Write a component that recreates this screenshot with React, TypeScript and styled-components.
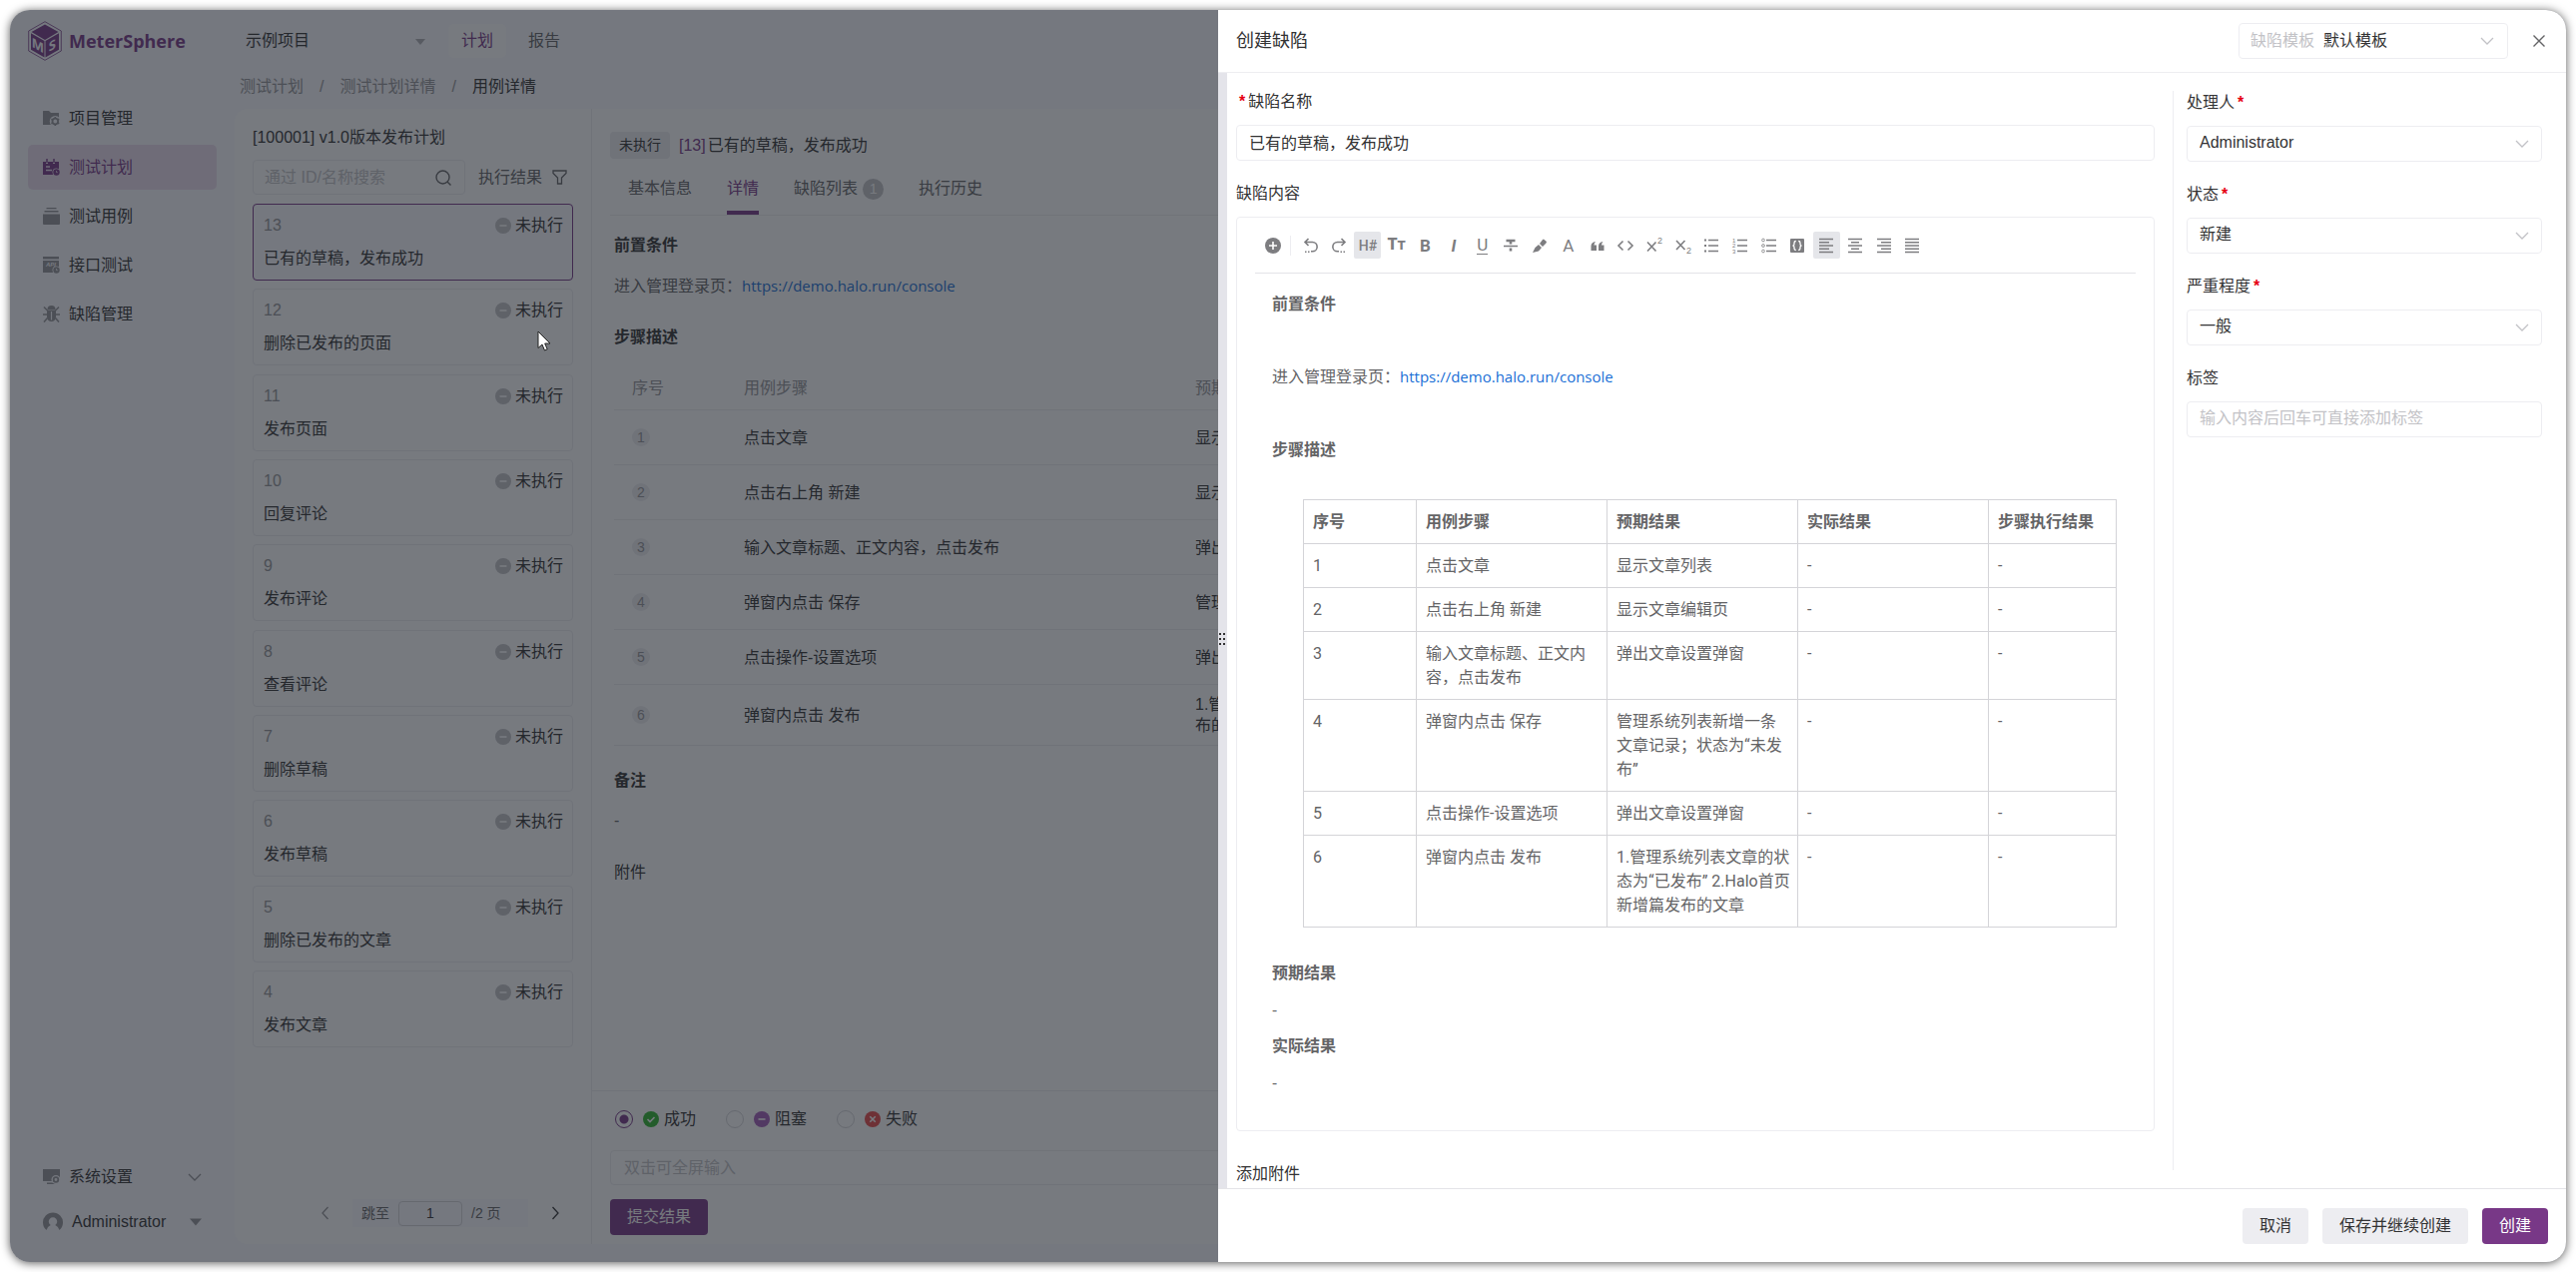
import React from "react";
import styled, { createGlobalStyle, css } from "styled-components";

const purple = "#783887";
const text1 = "#323233";
const text2 = "#646466";
const text3 = "#959598";
const text4 = "#c2c2c6";
const line = "#ededf1";
const shell = "#f9f9fe";
const ui = `"Liberation Sans", "Noto Sans CJK SC", sans-serif`;
const prose = `"Open Sans", "Noto Sans CJK SC", sans-serif`;
const compact = `Roboto, "Noto Sans CJK SC", sans-serif`;

const GlobalStyle = createGlobalStyle`
  *, *::before, *::after { box-sizing: border-box; }
  body { margin: 0; background: #fff; }
  body, button, input, select { font-family: ${ui}; font-size: 16px; line-height: 24px; color: ${text1}; }
  button { border: 0; padding: 0; background: none; cursor: pointer; }
  h1, h2, h3, p, ul, ol { margin: 0; padding: 0; font-size: 16px; font-weight: 400; }
  li { list-style: none; }
  a { text-decoration: none; }
  svg { display: block; flex: none; }
`;

const Window = styled.div`
  position: relative;
  display: flex;
  height: calc(100vh - 20px);
  min-height: 1200px;
  margin: 10px;
  border-radius: 20px;
  overflow: hidden;
  background: ${shell};
`;
const Frame = styled.div`
  display: flow-root;
  & > div { box-shadow: 0 1px 10px rgba(0, 0, 0, 0.65); }
`;

/* ---------- sidebar ---------- */
const Sidebar = styled.aside`
  display: flex;
  flex-direction: column;
  flex: none;
  width: 225px;
  padding: 0 18px 18px;
`;
const Brand = styled.div`
  display: flex;
  align-items: center;
  gap: 7px;
  height: 62px;
  margin-bottom: 24px;
  color: ${purple};
  font-family: "Open Sans", sans-serif;
  font-size: 18px;
  font-weight: 700;
`;
const Nav = styled.nav`
  display: flex;
  flex-direction: column;
  gap: 4px;
  flex: 1;
`;
const NavItem = styled.button<{ $active?: boolean }>`
  display: flex;
  align-items: center;
  gap: 9px;
  width: 100%;
  height: 45px;
  padding: 0 15px;
  border-radius: 5px;
  text-align: left;
  color: ${(p) => (p.$active ? purple : text1)};
  background: ${(p) => (p.$active ? "#ebddee" : "transparent")};
  svg { color: ${(p) => (p.$active ? purple : text3)}; }
  span { flex: 1; }
`;

/* ---------- main ---------- */
const Main = styled.div`
  display: flex;
  flex-direction: column;
  flex: 1;
  min-width: 0;
  padding-bottom: 18px;
`;
const TopBar = styled.header`
  display: flex;
  align-items: center;
  height: 62px;
  padding-left: 11px;
`;
const ProjectPicker = styled.div`
  position: relative;
  width: 185px;
  margin-right: 18px;
  select {
    width: 100%;
    appearance: none;
    border: 0;
    padding: 0;
    background: none;
  }
  svg { position: absolute; right: 5px; top: 9px; color: #b0b0b5; pointer-events: none; }
`;
const TopTab = styled.button<{ $active?: boolean }>`
  height: 34px;
  padding: 0 13px;
  margin-right: 9px;
  border-radius: 5px;
  color: ${(p) => (p.$active ? purple : text2)};
  background: ${(p) => (p.$active ? "#fff" : "none")};
`;
const Crumbs = styled.nav`
  display: flex;
  gap: 16px;
  height: 37px;
  padding: 3px 0 0 5px;
  color: ${text3};
  a { color: ${text3}; }
  strong { font-weight: 400; color: ${text1}; }
`;
const Content = styled.div`
  display: flex;
  flex: 1;
  min-height: 0;
  margin-right: 18px;
  border-radius: 13px;
  background: #fff;
`;

/* ---------- plan list ---------- */
const PlanPanel = styled.section`
  display: flex;
  flex-direction: column;
  flex: none;
  width: 358px;
  padding: 17px 18px;
  border-right: 1px solid ${line};
`;
const SearchRow = styled.div`
  display: flex;
  align-items: center;
  gap: 13px;
  margin: 10px 0 9px;
  color: ${text2};
`;
const SearchBox = styled.label`
  display: flex;
  align-items: center;
  width: 213px;
  height: 35px;
  padding: 0 13px 0 11px;
  border: 1px solid ${line};
  border-radius: 4px;
  input {
    flex: 1;
    min-width: 0;
    border: 0;
    padding: 0;
    background: none;
    outline: none;
  }
  input::placeholder { color: ${text4}; opacity: 1; }
`;
const FilterButton = styled.button`
  display: flex;
  align-items: center;
  gap: 10px;
  color: ${text2};
`;
const CaseList = styled.ul`
  display: flex;
  flex-direction: column;
  justify-content: space-between;
  height: 845px;
`;
const CaseCard = styled.li<{ $active?: boolean }>`
  display: flex;
  flex-direction: column;
  gap: 9px;
  height: 77px;
  padding: 9px 9px 9px 10px;
  border: 1px solid ${(p) => (p.$active ? purple : line)};
  border-radius: 4px;
  background: ${(p) => (p.$active ? shell : "#fff")};
`;
const CaseTop = styled.div`
  display: flex;
  justify-content: space-between;
  color: ${text3};
`;
const Status = styled.span`
  display: flex;
  align-items: center;
  gap: 4px;
  color: ${text1};
`;
const Pager = styled.div`
  display: flex;
  align-items: center;
  justify-content: flex-end;
  gap: 9px;
  margin-top: auto;
`;
const PagerArrow = styled.button<{ $muted?: boolean }>`
  display: flex;
  align-items: center;
  justify-content: center;
  width: 36px;
  height: 28px;
  color: ${(p) => (p.$muted ? text3 : text1)};
`;
const PagerJump = styled.label`
  display: flex;
  align-items: center;
  gap: 9px;
  width: 176px;
  height: 28px;
  padding-left: 9px;
  font-size: 14px;
  color: ${text2};
  background: ${shell};
  input {
    width: 64px;
    height: 25px;
    border: 1px solid #d4d4d8;
    border-radius: 4px;
    text-align: center;
    font-size: 14px;
    background: none;
  }
`;

/* ---------- case detail ---------- */
const Detail = styled.section`
  display: flex;
  flex-direction: column;
  flex: 1;
  min-width: 0;
`;
const DetailScroll = styled.div`
  flex: 1;
  min-height: 0;
  padding: 23px 18px 0;
  overflow: hidden;
`;
const DetailTitle = styled.div`
  display: flex;
  align-items: center;
  gap: 9px;
  height: 27px;
  em { font-style: normal; color: ${purple}; margin-right: 2px; }
`;
const Badge = styled.span`
  padding: 0 9px;
  border-radius: 4px;
  font-size: 14px;
  line-height: 27px;
  background: #ededf1;
`;
const Tabs = styled.div`
  display: flex;
  gap: 35px;
  height: 57px;
  padding-left: 18px;
  border-bottom: 1px solid ${line};
`;
const Tab = styled.button<{ $active?: boolean }>`
  display: flex;
  align-items: center;
  gap: 5px;
  padding-top: 4px;
  color: ${(p) => (p.$active ? purple : text2)};
  ${(p) => p.$active && css`box-shadow: inset 0 -4px 0 ${purple};`}
`;
const Count = styled.span`
  width: 21px;
  height: 21px;
  border-radius: 50%;
  font-size: 14px;
  line-height: 21px;
  text-align: center;
  color: #fff;
  background: ${text4};
`;
const DetailBody = styled.div`
  padding: 18px 0 0 4px;
`;
const Heading = styled.h3<{ $plain?: boolean }>`
  font-weight: ${(p) => (p.$plain ? 400 : 700)};
`;
const Line = styled.p<{ $bottom: number }>`
  margin: 16px 0 ${(p) => p.$bottom}px;
  color: ${text2};
  a { font-family: ${prose}; font-size: 15px; color: #1a6fd6; }
`;
const StepTable = styled.table`
  width: 1016px;
  margin: 17px 0 23px;
  border-collapse: separate;
  border-spacing: 0;
  table-layout: fixed;
  th, td { padding: 0 18px; border-bottom: 1px solid ${line}; text-align: left; line-height: 21px; }
  th { height: 44px; font-weight: 400; color: ${text3}; }
  td { height: 55px; }
  tr:last-child td { height: 61px; }
`;
const StepNo = styled.span`
  display: block;
  width: 18px;
  height: 18px;
  border-radius: 50%;
  font-size: 14px;
  line-height: 18px;
  text-align: center;
  color: ${text3};
  background: #ededf1;
`;
const ResultBar = styled.form`
  display: flex;
  flex-direction: column;
  align-items: flex-start;
  padding: 16px 18px 9px;
  border-top: 1px solid ${line};
`;
const Radios = styled.div`
  display: flex;
  gap: 30px;
  margin: 0 5px 19px;
`;
const RadioLabel = styled.label`
  display: flex;
  align-items: center;
  gap: 5px;
  input {
    appearance: none;
    width: 18px;
    height: 18px;
    margin: 0 5px 0 0;
    border: 1px solid #d4d4d8;
    border-radius: 50%;
  }
  input:checked {
    border-color: ${purple};
    background: radial-gradient(circle, ${purple} 4px, transparent 5px);
  }
`;
const CommentInput = styled.input`
  width: 100%;
  height: 35px;
  padding: 0 13px;
  margin-bottom: 14px;
  border: 1px solid ${line};
  border-radius: 4px;
  background: none;
  &::placeholder { color: ${text4}; opacity: 1; }
`;

const Button = styled.button<{ $primary?: boolean }>`
  height: 36px;
  padding: 0 17px;
  border-radius: 4px;
  color: ${(p) => (p.$primary ? "#fff" : text1)};
  background: ${(p) => (p.$primary ? purple : "#ededf1")};
`;

/* ---------- drawer ---------- */
const Mask = styled.div`
  position: absolute;
  inset: 0;
  background: rgba(29, 33, 41, 0.6);
`;
const Pointer = styled.svg`
  position: absolute;
  left: 528px;
  top: 321px;
`;
const Drawer = styled.section`
  position: absolute;
  top: 0;
  right: 0;
  bottom: 0;
  display: flex;
  flex-direction: column;
  width: 1350px;
  max-width: 100%;
  background: #fff;
`;
const DrawerHead = styled.header`
  display: flex;
  align-items: center;
  height: 63px;
  padding: 0 18px;
  border-bottom: 1px solid ${line};
  h2 { flex: 1; font-size: 18px; }
`;
const TemplatePicker = styled.label`
  position: relative;
  display: flex;
  align-items: center;
  gap: 9px;
  width: 270px;
  height: 36px;
  padding-left: 11px;
  border: 1px solid ${line};
  border-radius: 4px;
  color: ${text4};
  select {
    flex: 1;
    appearance: none;
    border: 0;
    padding: 0;
    background: none;
  }
  svg { position: absolute; right: 13px; top: 10px; pointer-events: none; }
`;
const CloseButton = styled.button`
  display: flex;
  justify-content: center;
  width: 18px;
  margin-left: 22px;
  color: ${text2};
`;
const DrawerBody = styled.div`
  display: flex;
  flex: 1;
  min-height: 0;
  overflow: hidden;
`;
const Handle = styled.div`
  display: flex;
  align-items: center;
  justify-content: center;
  width: 9px;
  padding-top: 16px;
  background: #e4e4ea;
`;
const FormMain = styled.div`
  flex: 1;
  min-width: 0;
  padding: 17px 18px 0 9px;
`;
const FormSide = styled.div`
  width: 370px;
  margin: 18px 24px 18px 0;
  padding-left: 13px;
  border-left: 1px solid ${line};
`;
const Field = styled.div`
  display: flex;
  flex-direction: column;
  gap: 11px;
  margin-bottom: 21px;
`;
const FieldLabel = styled.label`
  i {
    margin: 0 3px;
    font-style: normal;
    font-weight: 700;
    color: #e60012;
  }
`;
const TextInput = styled.input`
  width: 100%;
  height: 36px;
  padding: 0 12px 2px;
  border: 1px solid ${line};
  border-radius: 4px;
  outline: none;
  &::placeholder { color: ${text4}; opacity: 1; }
`;
const SelectBox = styled.div`
  position: relative;
  select {
    width: 100%;
    height: 36px;
    padding: 0 12px 2px;
    appearance: none;
    border: 1px solid ${line};
    border-radius: 4px;
    background: #fff;
  }
  svg { position: absolute; right: 13px; top: 11px; color: ${text4}; pointer-events: none; }
`;
const Editor = styled.div`
  margin-bottom: 10px;
  border: 1px solid ${line};
  border-radius: 4px;
  font-family: ${prose};
  color: ${text2};
`;
const Toolbar = styled.div`
  display: flex;
  align-items: center;
  height: 56px;
  margin: 0 18px;
  padding-left: 4px;
  border-bottom: 1px solid #e4e4e8;
`;
const Divider = styled.span`
  width: 1px;
  height: 20px;
  margin: 0 6px 0 4px;
  background: ${line};
`;
const Tools = styled.div`
  display: flex;
  justify-content: space-between;
  width: 630px;
`;
const Tool = styled.button<{ $on?: boolean }>`
  display: flex;
  align-items: center;
  justify-content: center;
  width: 27px;
  height: 27px;
  border-radius: 2px;
  color: #7d7d80;
  background: ${(p) => (p.$on ? "#e5e6ea" : "none")};
`;
const Glyph = styled.span<{ $weight?: number; $size?: number; $italic?: boolean; $underline?: boolean }>`
  font-family: Roboto, sans-serif;
  font-size: ${(p) => p.$size ?? 17}px;
  line-height: 18px;
  font-weight: ${(p) => p.$weight ?? 400};
  font-style: ${(p) => (p.$italic ? "italic" : "normal")};
  color: #7d7d80;
  border-bottom: ${(p) => (p.$underline ? "1px solid currentColor" : "0")};
  small { font-size: 13px; }
`;
const Doc = styled.div`
  padding: 18px 35px 36px;
  a { font-size: 15px; color: #1a6fd6; }
`;
const DocHead = styled.h3<{ $gap?: number }>`
  margin-bottom: ${(p) => p.$gap ?? 13}px;
  font-weight: 700;
`;
const DocLine = styled.p<{ $gap?: number }>`
  margin-bottom: ${(p) => p.$gap ?? 12}px;
`;
const DocTable = styled.table`
  width: calc(100% - 33px);
  margin: 0 0 33px 31px;
  border-collapse: collapse;
  table-layout: fixed;
  font-family: ${compact};
  th, td {
    padding: 10px 6px 9px 9px;
    border: 1px solid #d4d4d8;
    text-align: left;
    vertical-align: top;
  }
`;
const DrawerFoot = styled.footer`
  display: flex;
  align-items: center;
  justify-content: flex-end;
  gap: 14px;
  height: 74px;
  padding-right: 18px;
  border-top: 1px solid #e4e4e8;
`;

/* ---------- icons ---------- */
const Chevron = ({ size = 14, d = "M1 4l6 6 6-6" }: { size?: number; d?: string }) => (
  <svg width={size} height={size} viewBox="0 0 14 14" fill="none" stroke="currentColor" strokeWidth="1.3">
    <path d={d} />
  </svg>
);
const Caret = ({ width = 12 }: { width?: number }) => (
  <svg width={width} height="8" viewBox="0 0 12 8" fill="currentColor"><path d="M0 .5h12L6 7.5z" /></svg>
);
const Dot = ({ color, children }: { color: string; children: React.ReactNode }) => (
  <svg width="16" height="16" viewBox="0 0 16 16" fill="none" stroke="#fff" strokeWidth="1.6">
    <circle cx="8" cy="8" r="8" fill={color} stroke="none" />
    {children}
  </svg>
);
const Logo = () => (
  <svg width="34" height="40" viewBox="0 0 34 40">
    <path d="M17 .7L33.3 10v20L17 39.3.7 30V10z" fill="none" stroke={purple} strokeWidth=".8" />
    <path d="M17 3.5L30.5 11 17 19 3.5 11z" fill={purple} />
    <path d="M3 12.2l13.5 7.9V36.5L3 28.8z" fill={purple} />
    <path d="M31 12.2l-13.5 7.9V36.5L31 28.8z" fill={purple} />
    <g fill={shell} fontFamily="Open Sans" fontWeight="700" fontSize="13" textAnchor="middle">
      <text transform="translate(9.8 29) skewY(30)">M</text>
      <text transform="translate(24.3 29) skewY(-30)">S</text>
    </g>
  </svg>
);
const nav17 = { width: 17, height: 17, viewBox: "0 0 17 17" };
const FolderIcon = () => (
  <svg {...nav17} fill="currentColor">
    <path d="M0 1.5Q0 1 .5 1H6l2 2h7.5q.5 0 .5.5V15H.5q-.5 0-.5-.5z" />
    <circle cx="12.3" cy="11.5" r="5.5" fill={shell} />
    <circle cx="12.3" cy="11.5" r="2.8" fill="none" stroke="currentColor" strokeWidth="1.8" />
    <path d="M12.3 7v1.500M12.3 14.500V16M8.400 9.200l1.300.8M14.900 13l1.300.8M16.200 9.200l-1.300.8M9.700 13l-1.300.8" stroke="currentColor" strokeWidth="1.600" />
  </svg>
);
const PlanIcon = () => (
  <svg {...nav17}>
    <path d="M0 3h3v2h2V3h5v2h2V3h4v13H0z" fill="currentColor" />
    <path d="M4 0v4M11 0v4" stroke="currentColor" strokeWidth="1.400" />
    <path d="M3 8h4M3 11.500h6" stroke="#ebddee" strokeWidth="1.500" />
    <circle cx="13.500" cy="13.500" r="4" fill="#ebddee" />
    <circle cx="13.500" cy="13.500" r="3.200" fill="currentColor" />
    <path d="M13.500 12v1.700h1.300" stroke="#ebddee" fill="none" strokeWidth=".8" />
  </svg>
);
const StackIcon = () => (
  <svg {...nav17} fill="currentColor">
    <path d="M3.500 0h10v1.200h-10zM1.500 3h14v1.500h-14zM0 6.500h17V16q0 1-1 1H1q-1 0-1-1z" />
  </svg>
);
const ApiIcon = () => (
  <svg {...nav17}>
    <path d="M0 0h16v2.500H0zM0 4h16v12H0z" fill="currentColor" />
    <circle cx="13.500" cy="13.500" r="4" fill={shell} />
    <circle cx="13.500" cy="13.500" r="3.200" fill="currentColor" />
    <path d="M13.500 12v1.700h1.300" stroke={shell} fill="none" strokeWidth=".8" />
    <text x="8" y="10" fontSize="6" fontWeight="700" fontStyle="italic" textAnchor="middle" fill={shell}>API</text>
  </svg>
);
const BugIcon = () => (
  <svg {...nav17} fill="currentColor">
    <path d="M4.500 4a4 4 0 0 1 8 0z" />
    <path d="M4 4.500h9v7a4.500 4.500 0 0 1-9 0z" />
    <path d="M1 1.500L4.500 5M16 1.500L12.500 5M0 9h4M13 9h4M4.500 12.500L1 16.500M12.500 12.500l3.500 4" stroke="currentColor" strokeWidth="1.500" />
    <path d="M8.500 6v8.500" stroke={shell} strokeWidth="1.200" />
  </svg>
);
const ScreenIcon = () => (
  <svg {...nav17} fill="currentColor">
    <path d="M0 1h17v12H0zM4 14.500h8V16H4z" />
    <circle cx="13" cy="11.500" r="4.500" fill={shell} />
    <circle cx="13" cy="11.500" r="2.300" fill="none" stroke="currentColor" strokeWidth="1.800" />
  </svg>
);
const UserIcon = () => (
  <svg width="20" height="20" viewBox="0 0 20 20" fill="currentColor">
    <path fillRule="evenodd" d="M3.500 18A10 10 0 1 1 16.500 18Q15.500 14.500 12.300 13A4.200 4.200 0 1 0 7.700 13Q4.500 14.500 3.500 18z" />
  </svg>
);
const CircleX = <path d="M5.300 5.300l5.400 5.400M10.700 5.300l-5.400 5.400" />;
const Minus = <path d="M4.500 8h7" />;
const Check = <path d="M4.500 8l2.500 2.500 4.500-4.500" />;

const I = ({ children, w = 1.6 }: { children: React.ReactNode; w?: number }) => (
  <svg width="18" height="18" viewBox="0 0 18 18" fill="none" stroke="currentColor" strokeWidth={w}>{children}</svg>
);
const bars = (xs: [number, number][]) => (
  <I w={1.3}><path d={xs.map(([a, b], i) => `M${a} ${2.5 + i * 3.25}H${b}`).join("")} /></I>
);
const rows3 = <path d="M6 3.500h10M6 9h10M6 14.500h10" />;

const tools: { name: string; on?: boolean; icon: React.ReactNode }[] = [
  { name: "撤销", icon: <I><path d="M6.500 2L3 5.500 6.500 9M3 5.500h7.500a4.600 4.600 0 0 1 0 9.300h-1.500" /><path d="M3 15.200h1.500M6 15.200h1.500" /></I> },
  { name: "重做", icon: <I><path d="M11.500 2L15 5.500 11.500 9M15 5.500H7.500a4.600 4.600 0 0 0 0 9.300h1.500" /><path d="M10.500 15.200H12M13.500 15.200H15" /></I> },
  { name: "标题", on: true, icon: <Glyph $weight={500} $size={14}>H#</Glyph> },
  { name: "字号", icon: <Glyph $weight={900} $size={16}>T<small>T</small></Glyph> },
  { name: "加粗", icon: <Glyph $weight={700}>B</Glyph> },
  { name: "斜体", icon: <Glyph $weight={700} $italic>I</Glyph> },
  { name: "下划线", icon: <Glyph $underline>U</Glyph> },
  { name: "删除线", icon: <I><path d="M2 9.500h14" /><path d="M4.500 4h9M9 4v3.500M9 11.500v3" strokeWidth="2.600" /></I> },
  { name: "高亮", icon: <I><path d="M2 16l2.500-5 3.500-3 3 3-3 3.500zM9 7l3-4 1-.5L16 5l-.5 1.500-3.500 3.500z" fill="currentColor" stroke="none" /></I> },
  { name: "颜色", icon: <Glyph>A</Glyph> },
  { name: "引用", icon: <I><path d="M2.500 14V9.500Q2.500 5.500 7 5q-1.500 1.500-1.500 3.500H8V14zM10 14V9.500Q10 5.500 14.500 5q-1.500 1.500-1.500 3.500h2.500V14z" fill="currentColor" stroke="none" /></I> },
  { name: "代码", icon: <I><path d="M6.500 4.500L2 9l4.500 4.500M11.500 4.500L16 9l-4.500 4.500" /></I> },
  { name: "上标", icon: <I><path d="M2 5.500l8.500 9M10.500 5.500L2 14.500" /><text x="12" y="6.500" fontSize="9" fill="currentColor" stroke="none">2</text></I> },
  { name: "下标", icon: <I><path d="M2 4l8.500 9M10.500 4L2 13" /><text x="12" y="17" fontSize="9" fill="currentColor" stroke="none">2</text></I> },
  { name: "无序列表", icon: <I w={1.3}>{rows3}<path d="M2 3.500h2M2 9h2M2 14.500h2" strokeWidth="2" /></I> },
  { name: "有序列表", icon: <I w={1.3}>{rows3}<g fontSize="6" fill="currentColor" stroke="none"><text x="1" y="5.500">1</text><text x="1" y="11">2</text><text x="1" y="16.500">3</text></g></I> },
  { name: "任务列表", icon: <I w={1.3}>{rows3}<g strokeWidth=".8"><circle cx="3" cy="3.500" r="1.400" /><circle cx="3" cy="9" r="1.400" /><circle cx="3" cy="14.500" r="1.400" /></g></I> },
  { name: "代码块", icon: <I><rect x="2" y="2" width="14" height="14" rx="1" fill="currentColor" stroke="none" /><path d="M7.800 4.500q-1.800 0-1.800 1.700v1.300q0 1.500-1.500 1.500 1.500 0 1.500 1.500v1.300q0 1.700 1.800 1.700M10.200 4.500q1.800 0 1.800 1.700v1.300q0 1.500 1.500 1.500-1.500 0-1.500 1.500v1.300q0 1.700-1.800 1.700" stroke="#fff" strokeWidth="1.300" /></I> },
  { name: "左对齐", on: true, icon: bars([[2, 16], [2, 12], [2, 16], [2, 12], [2, 16]]) },
  { name: "居中", icon: bars([[2, 16], [5, 13], [2, 16], [5, 13], [2, 16]]) },
  { name: "右对齐", icon: bars([[2, 16], [6, 16], [2, 16], [6, 16], [2, 16]]) },
  { name: "两端对齐", icon: bars([[2, 16], [2, 16], [2, 16], [2, 16], [2, 16]]) },
];

/* ---------- data ---------- */
const cases: [number, string][] = [
  [13, "已有的草稿，发布成功"], [12, "删除已发布的页面"], [11, "发布页面"], [10, "回复评论"], [9, "发布评论"],
  [8, "查看评论"], [7, "删除草稿"], [6, "发布草稿"], [5, "删除已发布的文章"], [4, "发布文章"],
];
const steps: [string, string][] = [
  ["点击文章", "显示文章列表"],
  ["点击右上角 新建", "显示文章编辑页"],
  ["输入文章标题、正文内容，点击发布", "弹出文章设置弹窗"],
  ["弹窗内点击 保存", "管理系统列表新增一条文章记录；状态为“未发布”"],
  ["点击操作-设置选项", "弹出文章设置弹窗"],
  ["弹窗内点击 发布", "1.管理系统列表文章的状态为“已发布” 2.Halo首页新增篇发布的文章"],
];
const menu: [string, React.ReactNode][] = [
  ["项目管理", <FolderIcon />], ["测试计划", <PlanIcon />], ["测试用例", <StackIcon />],
  ["接口测试", <ApiIcon />], ["缺陷管理", <BugIcon />],
];
const url = "https://demo.halo.run/console";

function PlanSide() {
  return (
    <PlanPanel>
      <h1>[100001] v1.0版本发布计划</h1>
      <SearchRow>
        <SearchBox>
          <input type="text" placeholder="通过 ID/名称搜索" aria-label="通过 ID/名称搜索" />
          <svg width="16" height="16" viewBox="0 0 16 16" fill="none" stroke="currentColor" strokeWidth="1.400">
            <circle cx="7.500" cy="7.500" r="6.500" /><path d="M12 12l3.500 3.500" />
          </svg>
        </SearchBox>
        <FilterButton type="button">
          执行结果
          <svg width="15" height="15" viewBox="0 0 15 15" fill="none" stroke="currentColor" strokeWidth="1.300">
            <path d="M1 1h13v2.500L9.500 8v6h-4V8L1 3.500z" />
          </svg>
        </FilterButton>
      </SearchRow>
      <CaseList>
        {cases.map(([id, name], i) => (
          <CaseCard key={id} $active={i === 0}>
            <CaseTop>{id}<Status><Dot color={text4}>{Minus}</Dot>未执行</Status></CaseTop>
            <span>{name}</span>
          </CaseCard>
        ))}
      </CaseList>
      <Pager>
        <PagerArrow type="button" $muted aria-label="上一页"><Chevron d="M9.500 1l-5.500 6 5.500 6" /></PagerArrow>
        <PagerJump>跳至<input type="text" defaultValue="1" /> /2 页</PagerJump>
        <PagerArrow type="button" aria-label="下一页"><Chevron d="M4.500 1l5.500 6-5.500 6" /></PagerArrow>
      </Pager>
    </PlanPanel>
  );
}

function CaseDetail() {
  return (
    <Detail>
      <DetailScroll>
        <DetailTitle><Badge>未执行</Badge><span><em>[13]</em>已有的草稿，发布成功</span></DetailTitle>
        <Tabs>
          <Tab type="button">基本信息</Tab>
          <Tab type="button" $active>详情</Tab>
          <Tab type="button">缺陷列表<Count>1</Count></Tab>
          <Tab type="button">执行历史</Tab>
        </Tabs>
        <DetailBody>
          <Heading>前置条件</Heading>
          <Line $bottom={27}>进入管理登录页：<a href={url}>{url}</a></Line>
          <Heading>步骤描述</Heading>
          <StepTable>
            <colgroup><col width="112" /><col width="452" /><col width="452" /></colgroup>
            <thead><tr><th>序号</th><th>用例步骤</th><th>预期结果</th></tr></thead>
            <tbody>
              {steps.map(([step, expected], i) => (
                <tr key={i}><td><StepNo>{i + 1}</StepNo></td><td>{step}</td><td>{expected}</td></tr>
              ))}
            </tbody>
          </StepTable>
          <Heading>备注</Heading>
          <Line $bottom={28}>-</Line>
          <Heading $plain>附件</Heading>
        </DetailBody>
      </DetailScroll>
      <ResultBar>
        <Radios>
          <RadioLabel><input type="radio" name="result" defaultChecked /><Dot color="#2fb52f">{Check}</Dot>成功</RadioLabel>
          <RadioLabel><input type="radio" name="result" /><Dot color="#a45cb8">{Minus}</Dot>阻塞</RadioLabel>
          <RadioLabel><input type="radio" name="result" /><Dot color="#e84a4a">{CircleX}</Dot>失败</RadioLabel>
        </Radios>
        <CommentInput type="text" placeholder="双击可全屏输入" aria-label="双击可全屏输入" />
        <Button type="button" $primary>提交结果</Button>
      </ResultBar>
    </Detail>
  );
}

function SideSelect({ id, label, value }: { id: string; label: string; value: string }) {
  return (
    <Field>
      <FieldLabel htmlFor={id}>{label}<i>*</i></FieldLabel>
      <SelectBox>
        <select id={id}><option>{value}</option></select>
        <Chevron />
      </SelectBox>
    </Field>
  );
}

function DefectDrawer() {
  return (
    <Drawer role="dialog" aria-label="创建缺陷">
      <DrawerHead>
        <h2>创建缺陷</h2>
        <TemplatePicker>
          缺陷模板
          <select><option>默认模板</option></select>
          <Chevron />
        </TemplatePicker>
        <CloseButton type="button" aria-label="关闭">
          <svg width="12" height="12" viewBox="0 0 12 12" stroke="currentColor" strokeWidth="1.400"><path d="M.5.5l11 11M11.5.5l-11 11" /></svg>
        </CloseButton>
      </DrawerHead>
      <DrawerBody>
        <Handle>
          <svg width="7" height="12" viewBox="0 0 7 12" fill={text1}>
            <path d="M0 0h2v2H0zM4 0h2v2H4zM0 5h2v2H0zM4 5h2v2H4zM0 10h2v2H0zM4 10h2v2H4z" />
          </svg>
        </Handle>
        <FormMain>
          <Field>
            <FieldLabel htmlFor="defect-name"><i>*</i>缺陷名称</FieldLabel>
            <TextInput id="defect-name" defaultValue="已有的草稿，发布成功" />
          </Field>
          <Field>
            <span id="defect-body">缺陷内容</span>
            <Editor aria-labelledby="defect-body">
              <Toolbar>
                <Tool type="button" aria-label="插入">
                  <svg width="16" height="16" viewBox="0 0 16 16"><circle cx="8" cy="8" r="8" fill="currentColor" /><path d="M8 4v8M4 8h8" stroke="#fff" strokeWidth="1.600" /></svg>
                </Tool>
                <Divider />
                <Tools>
                  {tools.map((t) => <Tool type="button" key={t.name} $on={t.on} aria-label={t.name}>{t.icon}</Tool>)}
                </Tools>
              </Toolbar>
              <Doc>
                <DocHead $gap={49}>前置条件</DocHead>
                <DocLine $gap={49}>进入管理登录页：<a href={url}>{url}</a></DocLine>
                <DocHead $gap={38}>步骤描述</DocHead>
                <DocTable>
                  <colgroup><col width="113" /><col width="191" /><col width="191" /><col width="191" /><col /></colgroup>
                  <thead>
                    <tr><th>序号</th><th>用例步骤</th><th>预期结果</th><th>实际结果</th><th>步骤执行结果</th></tr>
                  </thead>
                  <tbody>
                    {steps.map(([step, expected], i) => (
                      <tr key={i}><td>{i + 1}</td><td>{step}</td><td>{expected}</td><td>-</td><td>-</td></tr>
                    ))}
                  </tbody>
                </DocTable>
                <DocHead>预期结果</DocHead>
                <DocLine>-</DocLine>
                <DocHead>实际结果</DocHead>
                <DocLine $gap={0}>-</DocLine>
              </Doc>
            </Editor>
          </Field>
          <span>添加附件</span>
        </FormMain>
        <FormSide>
          <SideSelect id="owner" label="处理人" value="Administrator" />
          <SideSelect id="state" label="状态" value="新建" />
          <SideSelect id="severity" label="严重程度" value="一般" />
          <Field>
            <FieldLabel htmlFor="tags">标签</FieldLabel>
            <TextInput id="tags" placeholder="输入内容后回车可直接添加标签" />
          </Field>
        </FormSide>
      </DrawerBody>
      <DrawerFoot>
        <Button type="button">取消</Button>
        <Button type="button">保存并继续创建</Button>
        <Button type="button" $primary>创建</Button>
      </DrawerFoot>
    </Drawer>
  );
}

export default function App() {
  return (
    <Frame>
      <GlobalStyle />
      <Window lang="zh-CN">
        <Sidebar>
          <Brand><Logo />MeterSphere</Brand>
          <Nav>
            {menu.map(([name, icon]) => (
              <NavItem type="button" key={name} $active={name === "测试计划"}>{icon}<span>{name}</span></NavItem>
            ))}
          </Nav>
          <NavItem type="button"><ScreenIcon /><span>系统设置</span><Chevron /></NavItem>
          <NavItem type="button"><UserIcon /><span>Administrator</span><Caret /></NavItem>
        </Sidebar>
        <Main>
          <TopBar>
            <ProjectPicker><select aria-label="项目"><option>示例项目</option></select><Caret width={10} /></ProjectPicker>
            <TopTab type="button" $active>计划</TopTab>
            <TopTab type="button">报告</TopTab>
          </TopBar>
          <Crumbs>
            <a href="#plans">测试计划</a><span>/</span><a href="#plan">测试计划详情</a><span>/</span><strong>用例详情</strong>
          </Crumbs>
          <Content>
            <PlanSide />
            <CaseDetail />
          </Content>
        </Main>
        <Mask />
        <Pointer width="14" height="22" viewBox="0 0 14 22">
          <path d="M1 1v16.500l4-3.500 2.500 6 2.700-1.200-2.500-5.800H13z" fill="#fff" stroke="#222" strokeWidth="1" />
        </Pointer>
        <DefectDrawer />
      </Window>
    </Frame>
  );
}
